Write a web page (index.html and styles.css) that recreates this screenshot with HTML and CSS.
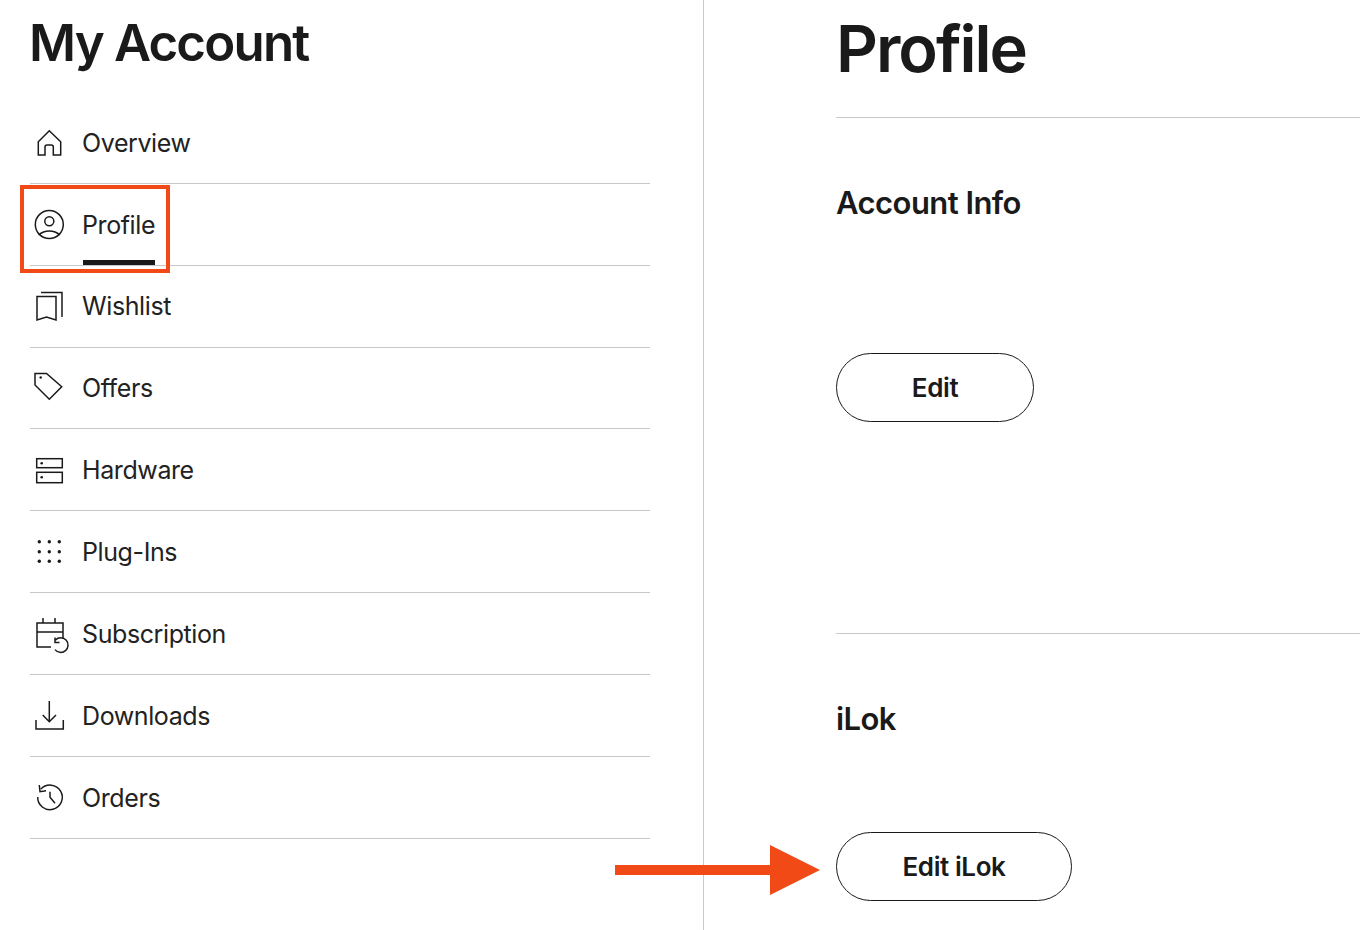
FILE: index.html
```html
<!DOCTYPE html>
<html lang="en">
<head>
<meta charset="utf-8">
<title>My Account - Profile</title>
<link rel="stylesheet" href="styles.css">
</head>
<body>
<div class="page">
  <aside class="side">
    <h2 class="side-title">My Account</h2>
    <nav class="nav">
      <a class="item low"><svg class="ico" viewBox="0 0 30 30"><path d="M4.300 13.700 15.300 2.700l11.400 11V27h-7.400V19a2 2 0 0 0-2-2h-4.300a2 2 0 0 0-2 2v8H4.300z"/></svg><span class="lbl">Overview</span></a>
      <a class="item low"><svg class="ico" viewBox="0 0 30 30"><circle cx="15.300" cy="14.500" r="14"/><circle cx="15.300" cy="11.200" r="4.500"/><path d="M4.700 25C8 22 11 21 15.300 21s7.300 1 10.600 4"/></svg><span class="lbl active">Profile</span></a>
      <a class="item"><svg class="ico" viewBox="0 0 30 30"><path d="M3 5.500h19V29l-9.500-3L3 29z"/><path d="M7 1.500h21V26"/></svg><span class="lbl">Wishlist</span></a>
      <a class="item"><svg class="ico" viewBox="0 0 30 30"><path d="M1 .5h11.500l15.200 13.200-12.400 12.600L1 12z"/><circle cx="6.700" cy="4.500" r="1.200" class="dot"/></svg><span class="lbl">Offers</span></a>
      <a class="item"><svg class="ico" viewBox="0 0 30 30"><rect x="2.700" y="3.700" width="25.600" height="9"/><rect x="2.700" y="17.300" width="25.600" height="10.400"/><circle cx="7.700" cy="8.300" r="1.300" class="dot"/><circle cx="7.700" cy="22.300" r="1.300" class="dot"/></svg><span class="lbl">Hardware</span></a>
      <a class="item"><svg class="ico" viewBox="0 0 30 30"><g class="dot"><circle cx="5.300" cy="4.700" r="1.700"/><circle cx="15.300" cy="4.700" r="1.700"/><circle cx="25.300" cy="4.700" r="1.700"/><circle cx="5.300" cy="14.700" r="1.700"/><circle cx="15.300" cy="14.700" r="1.700"/><circle cx="25.300" cy="14.700" r="1.700"/><circle cx="5.300" cy="24.300" r="1.700"/><circle cx="15.300" cy="24.300" r="1.700"/><circle cx="25.300" cy="24.300" r="1.700"/></g></svg><span class="lbl">Plug-Ins</span></a>
      <a class="item"><svg class="ico" viewBox="0 0 30 30"><path d="M17 28H3V4h26v16M3 13h26M9 -1v5M21 -1v5"/><path d="M21.500 21A7.300 7.300 0 1 1 21 30.600M21 18.500v5h4.500"/></svg><span class="lbl">Subscription</span></a>
      <a class="item low"><svg class="ico" viewBox="0 0 30 30"><path d="M15.300 0v20.700M8.700 14l6.600 6.700L22 14M2 19v9h27.300v-9"/></svg><span class="lbl">Downloads</span></a>
      <a class="item low"><svg class="ico" viewBox="0 0 30 30"><path d="M7 6A12.300 12.300 0 1 1 3.700 14M5.300 2l.7 6.700 6-1M16 8.700v5.600l5 6"/></svg><span class="lbl">Orders</span></a>
    </nav>
  </aside>
  <main class="main">
    <h1 class="title">Profile</h1>
    <section class="sec sec-info">
      <h3 class="sec-title">Account Info</h3>
      <button class="btn btn-edit">Edit</button>
    </section>
    <section class="sec sec-ilok">
      <h3 class="sec-title">iLok</h3>
      <button class="btn btn-ilok">Edit iLok</button>
    </section>
  </main>
</div>
<div class="mark-box"></div>
<svg class="mark-arrow" viewBox="0 0 205 50"><path d="M0 20h155V0l50 25-50 25V30H0z"/></svg>
</body>
</html>
```
FILE: styles.css
```css
* { box-sizing: border-box; }
html, body { margin: 0; height: 100%; background: #fff; overflow: hidden; }
body { font-family: Inter, "Liberation Sans", sans-serif; color: #1a1a1a; position: relative; }
.page { display: flex; height: 930px; }
.side { width: 704px; flex: none; padding: 0 53px 0 30px; border-right: 1px solid #c8c8c8; }
.side-title { margin: 0 0 0 -1px; padding-top: 14px; height: 101.900px; font-size: 51px; line-height: 58px; font-weight: 600; letter-spacing: -1.800px; }
.nav { display: flex; flex-direction: column; }
.item { height: 81.880px; display: flex; align-items: center; gap: 18px; border-bottom: 1px solid #c8c8c8; padding-left: 4px; font-size: 25px; letter-spacing: -.4px; color: #222; }
.item.low { padding-top: 2px; }
.ico { width: 30px; height: 30px; flex: none; fill: none; stroke: #1a1a1a; stroke-width: 1.500; overflow: visible; }
.ico .dot, .ico g.dot circle { fill: #1a1a1a; stroke: none; }
.lbl { position: relative; line-height: 30px; }
.lbl.active::after { content: ""; position: absolute; left: 1px; right: 0; top: 50px; height: 5px; background: #1a1a1a; }
.main { flex: 1; padding-left: 132px; min-width: 0; }
.title { margin: 0; padding-top: 12px; height: 118px; border-bottom: 1px solid #c8c8c8; font-size: 65px; line-height: 74px; font-weight: 600; letter-spacing: -2px; }
.sec-title { margin: 0; font-size: 31px; line-height: 38px; font-weight: 600; letter-spacing: -.55px; }
.sec-info { height: 516px; padding-top: 66px; border-bottom: 1px solid #c8c8c8; }
.sec-ilok { padding-top: 66px; }
.btn { display: block; height: 69px; border: 1px solid #1a1a1a; border-radius: 35px; background: #fff; font-family: inherit; font-size: 26px; font-weight: 600; letter-spacing: -.4px; color: #1a1a1a; padding: 0; }
.btn-edit { width: 198px; margin-top: 131px; }
.btn-ilok { width: 236px; margin-top: 94px; }
.mark-box { position: absolute; left: 20px; top: 185px; width: 150px; height: 88px; border: 4px solid #f24a16; }
.mark-arrow { position: absolute; left: 615px; top: 845px; width: 205px; height: 50px; fill: #f24a16; }
```
